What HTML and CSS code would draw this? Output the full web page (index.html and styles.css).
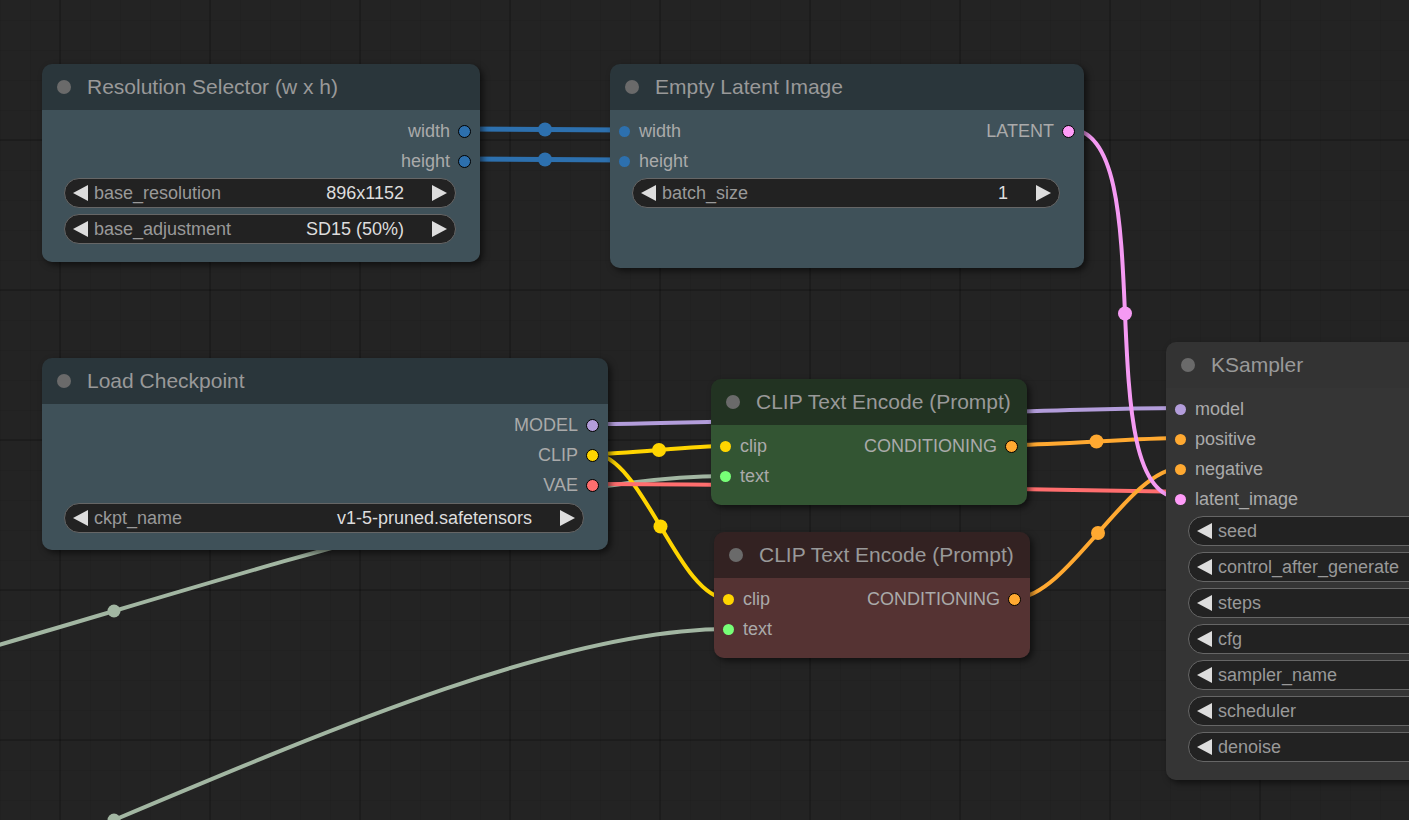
FILE: index.html
```html
<!DOCTYPE html>
<html>
<head>
<meta charset="utf-8">
<title>Workflow</title>
<link rel="stylesheet" href="styles.css">
</head>
<body>
<div class="canvas">
  <svg class="links" width="1409" height="820" viewBox="0 0 1409 820">
    <g fill="none" stroke-width="4" stroke-linecap="round">
      <path class="l-str" d="M-497,746 C-184,746 412,476 725,476"/>
      <path class="l-str" d="M-500,1011 C-178.5,1011 406.5,629 728,629"/>
      <path class="l-int" d="M465,129 C505,129 585,130 625,130"/>
      <path class="l-int" d="M465,159 C505,159 585,160 625,160"/>
      <path class="l-model" d="M593,424 C740,424 1034,408 1181,408"/>
      <path class="l-clip" d="M593,454 C626,454 692,446 725,446"/>
      <path class="l-clip" d="M593,454 C642.5,454 678.5,599 728,599"/>
      <path class="l-vae" d="M593,484 C895,484 1498,500 1800,500"/>
      <path class="l-cond" d="M1012,445 C1054,445 1139,438 1181,438"/>
      <path class="l-cond" d="M1015,598 C1067.7,598 1128.3,468 1181,468"/>
      <path class="l-latent" d="M1069,129 C1165,129 1085,498 1181,498"/>
    </g>
    <g>
      <circle class="m-str" cx="114" cy="611" r="6.5"/>
      <circle class="m-str" cx="114" cy="820" r="6.5"/>
      <circle class="m-int" cx="545" cy="129.5" r="7"/>
      <circle class="m-int" cx="545" cy="159.5" r="7"/>
      <circle class="m-clip" cx="659" cy="450" r="7"/>
      <circle class="m-clip" cx="660.5" cy="526.5" r="7"/>
      <circle class="m-cond" cx="1096.5" cy="441.5" r="7"/>
      <circle class="m-cond" cx="1098" cy="533" r="7"/>
      <circle class="m-latent" cx="1125" cy="313.5" r="7"/>
    </g>
  </svg>

  <div class="node pale n-res">
    <div class="title"><span class="tdot"></span><span class="tname">Resolution Selector (w x h)</span></div>
    <div class="body">
      <div class="row"><span class="out"><span class="lbl">width</span><span class="dot ring c-int"></span></span></div>
      <div class="row"><span class="out"><span class="lbl">height</span><span class="dot ring c-int"></span></span></div>
      <div class="widget"><span class="arr al"></span><span class="wl">base_resolution</span><span class="wv">896x1152</span><span class="arr ar"></span></div>
      <div class="widget"><span class="arr al"></span><span class="wl">base_adjustment</span><span class="wv">SD15 (50%)</span><span class="arr ar"></span></div>
    </div>
  </div>

  <div class="node pale n-latent">
    <div class="title"><span class="tdot"></span><span class="tname">Empty Latent Image</span></div>
    <div class="body">
      <div class="row"><span class="in"><span class="dot c-int"></span><span class="lbl">width</span></span><span class="out"><span class="lbl">LATENT</span><span class="dot ring c-latent"></span></span></div>
      <div class="row"><span class="in"><span class="dot c-int"></span><span class="lbl">height</span></span></div>
      <div class="widget"><span class="arr al"></span><span class="wl">batch_size</span><span class="wv">1</span><span class="arr ar"></span></div>
    </div>
  </div>

  <div class="node pale n-ckpt">
    <div class="title"><span class="tdot"></span><span class="tname">Load Checkpoint</span></div>
    <div class="body">
      <div class="row"><span class="out"><span class="lbl">MODEL</span><span class="dot ring c-model"></span></span></div>
      <div class="row"><span class="out"><span class="lbl">CLIP</span><span class="dot ring c-clip"></span></span></div>
      <div class="row"><span class="out"><span class="lbl">VAE</span><span class="dot ring c-vae"></span></span></div>
      <div class="widget"><span class="arr al"></span><span class="wl">ckpt_name</span><span class="wv">v1-5-pruned.safetensors</span><span class="arr ar"></span></div>
    </div>
  </div>

  <div class="node green n-pos">
    <div class="title"><span class="tdot"></span><span class="tname">CLIP Text Encode (Prompt)</span></div>
    <div class="body">
      <div class="row"><span class="in"><span class="dot c-clip"></span><span class="lbl">clip</span></span><span class="out"><span class="lbl">CONDITIONING</span><span class="dot ring c-cond"></span></span></div>
      <div class="row"><span class="in"><span class="dot c-str"></span><span class="lbl">text</span></span></div>
    </div>
  </div>

  <div class="node red n-neg">
    <div class="title"><span class="tdot"></span><span class="tname">CLIP Text Encode (Prompt)</span></div>
    <div class="body">
      <div class="row"><span class="in"><span class="dot c-clip"></span><span class="lbl">clip</span></span><span class="out"><span class="lbl">CONDITIONING</span><span class="dot ring c-cond"></span></span></div>
      <div class="row"><span class="in"><span class="dot c-str"></span><span class="lbl">text</span></span></div>
    </div>
  </div>

  <div class="node plain n-ks">
    <div class="title"><span class="tdot"></span><span class="tname">KSampler</span></div>
    <div class="body">
      <div class="row"><span class="in"><span class="dot c-model"></span><span class="lbl">model</span></span></div>
      <div class="row"><span class="in"><span class="dot c-cond"></span><span class="lbl">positive</span></span></div>
      <div class="row"><span class="in"><span class="dot c-cond"></span><span class="lbl">negative</span></span></div>
      <div class="row"><span class="in"><span class="dot c-latent"></span><span class="lbl">latent_image</span></span></div>
      <div class="widget"><span class="arr al"></span><span class="wl">seed</span></div>
      <div class="widget"><span class="arr al"></span><span class="wl">control_after_generate</span></div>
      <div class="widget"><span class="arr al"></span><span class="wl">steps</span></div>
      <div class="widget"><span class="arr al"></span><span class="wl">cfg</span></div>
      <div class="widget"><span class="arr al"></span><span class="wl">sampler_name</span></div>
      <div class="widget"><span class="arr al"></span><span class="wl">scheduler</span></div>
      <div class="widget"><span class="arr al"></span><span class="wl">denoise</span></div>
    </div>
  </div>
</div>
</body>
</html>
```

FILE: styles.css
```css
html, body {
  margin: 0;
  padding: 0;
  background: #222;
}

.canvas {
  position: relative;
  width: 1409px;
  height: 820px;
  overflow: hidden;
  font-family: "Liberation Sans", Arial, sans-serif;
  background-color: #232323;
  background-image:
    linear-gradient(to right, rgba(0, 0, 0, 0.16) 0, rgba(0, 0, 0, 0.16) 2px, transparent 2px),
    linear-gradient(to bottom, rgba(0, 0, 0, 0.16) 0, rgba(0, 0, 0, 0.16) 2px, transparent 2px),
    linear-gradient(to right, rgba(0, 0, 0, 0.07) 0, rgba(0, 0, 0, 0.07) 1px, transparent 1px),
    linear-gradient(to bottom, rgba(0, 0, 0, 0.07) 0, rgba(0, 0, 0, 0.07) 1px, transparent 1px);
  background-size: 150px 150px, 150px 150px, 30px 30px, 30px 30px;
  background-position: 59px 0, 0 289px, 0 0, 0 20px;
}

.links {
  position: absolute;
  left: 0;
  top: 0;
}

.l-str { stroke: #a2b6a2; }
.l-int { stroke: #2d70ae; stroke-width: 5; }
.l-model { stroke: #b39ddb; }
.l-clip { stroke: #ffd500; }
.l-vae { stroke: #ff6e6e; }
.l-cond { stroke: #ffa931; }
.l-latent { stroke: #f59af3; }

.m-str { fill: #a2b6a2; }
.m-int { fill: #2d70ae; }
.m-clip { fill: #ffd500; }
.m-cond { fill: #ffa931; }
.m-latent { fill: #f59af3; }

/* nodes */
.node {
  position: absolute;
  border-radius: 10px;
  overflow: hidden;
  box-shadow: 3px 3px 6px rgba(0, 0, 0, 0.55);
  display: flex;
  flex-direction: column;
}

.title {
  height: 46px;
  flex: none;
  display: flex;
  align-items: center;
  padding-left: 15px;
  color: #999;
  font-size: 21px;
}

.tdot {
  width: 14px;
  height: 14px;
  border-radius: 50%;
  background: #6a6a6a;
  margin-right: 16px;
  flex: none;
}

.tname {
  white-space: nowrap;
}

.body {
  flex: 1;
  padding-top: 6px;
}

.pale .title { background: #2a363b; }
.pale .body { background: #3f5159; }
.green .title { background: #223322; }
.green .body { background: #335533; }
.red .title { background: #332222; }
.red .body { background: #553333; }
.plain .title { background: #333333; }
.plain .body { background: #353535; }

.n-res { left: 42px; top: 64px; width: 438px; height: 198px; }
.n-latent { left: 610px; top: 64px; width: 474px; height: 204px; }
.n-ckpt { left: 42px; top: 358px; width: 566px; height: 192px; }
.n-pos { left: 711px; top: 379px; width: 316px; height: 126px; }
.n-neg { left: 714px; top: 532px; width: 316px; height: 126px; }
.n-ks { left: 1166px; top: 342px; width: 440px; height: 438px; }
.n-ckpt .widget { margin-top: 3px; }

/* slots */
.row {
  height: 30px;
  display: flex;
  align-items: center;
  justify-content: space-between;
  font-size: 18px;
  color: #aaa;
}

.in {
  display: flex;
  align-items: center;
  padding-left: 9px;
}

.in .lbl { margin-left: 9px; }

.out {
  display: flex;
  align-items: center;
  margin-left: auto;
  padding-right: 9px;
}

.out .lbl { margin-right: 8px; }

.lbl { white-space: nowrap; }

.dot {
  width: 11px;
  height: 11px;
  border-radius: 50%;
  flex: none;
  box-sizing: border-box;
}

.dot.ring {
  width: 13px;
  height: 13px;
  border: 1.5px solid #000;
}

.c-int { background: #2d70ae; }
.c-latent { background: #ff9cf9; }
.c-model { background: #b39ddb; }
.c-clip { background: #ffd500; }
.c-vae { background: #ff6e6e; }
.c-cond { background: #ffa931; }
.c-str { background: #77ff77; }

/* widgets */
.widget {
  height: 30px;
  box-sizing: border-box;
  margin: 2px 24px 0 22px;
  border: 1px solid #666;
  border-radius: 15px;
  background: #222;
  display: flex;
  align-items: center;
  padding: 0 8px;
  font-size: 18px;
  white-space: nowrap;
}

.widget + .widget { margin-top: 6px; }

.arr {
  width: 0;
  height: 0;
  flex: none;
  border-top: 8px solid transparent;
  border-bottom: 8px solid transparent;
}

.al { border-right: 15px solid #ddd; }
.ar { border-left: 15px solid #ddd; }

.wl {
  color: #999;
  margin-left: 6px;
}

.wv {
  color: #ddd;
  margin-left: auto;
  margin-right: 28px;
}

.n-ks .widget { margin-right: 0; }
```
